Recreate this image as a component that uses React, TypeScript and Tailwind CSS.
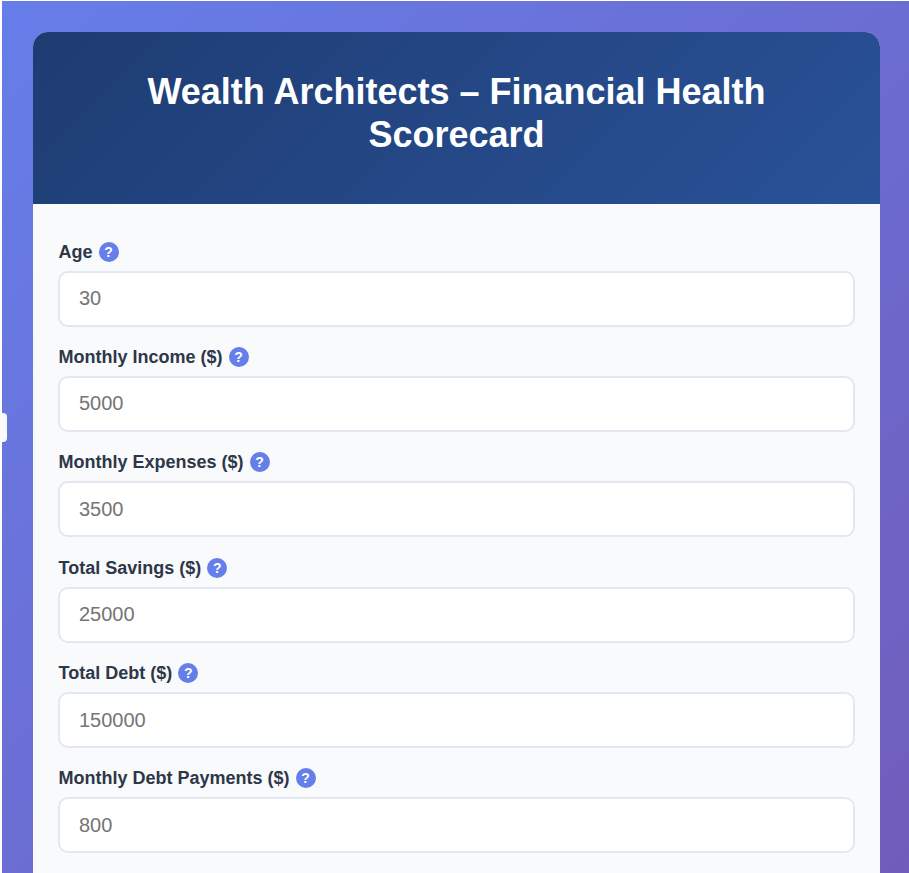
const fields = [
  { label: "Age", value: "30" },
  { label: "Monthly Income ($)", value: "5000" },
  { label: "Monthly Expenses ($)", value: "3500" },
  { label: "Total Savings ($)", value: "25000" },
  { label: "Total Debt ($)", value: "150000" },
  { label: "Monthly Debt Payments ($)", value: "800" },
];

const App = () => {
  return (
    <div className="relative h-[873px] overflow-hidden bg-white pl-[2px] pt-[1px] font-['Liberation_Sans',Arial,sans-serif]">
      <div className="h-[1800px] bg-[linear-gradient(135deg,#667eea_0%,#764ba2_100%)] pt-[31px] pl-[31px] pr-[29px]">
        <div className="overflow-hidden rounded-[15px] bg-[#f9fafc]">
          {/* header */}
          <div className="h-[172px] bg-[linear-gradient(135deg,#1e3c72_0%,#2a5298_100%)] px-[30px] pt-[38px] text-center">
            <h1 className="text-[36px] leading-[43px] font-bold text-white">
              Wealth Architects – Financial Health Scorecard
            </h1>
          </div>

          {/* form */}
          <div className="flex flex-col gap-[19.4px] px-[25px] pb-[200px] pt-[36.5px]">
            {fields.map((f) => (
              <div key={f.label} className="flex flex-col gap-[8px]">
                <label className="flex h-[22px] items-center gap-[6px] pl-[0.5px] text-[18px] leading-[22px] font-bold text-[#2d3748]">
                  {f.label}
                  <span className="flex h-[20px] w-[20px] items-center justify-center rounded-full bg-[#667eea] text-[14px] font-bold text-white">
                    ?
                  </span>
                </label>
                <input
                  readOnly
                  placeholder={f.value}
                  className="h-[56px] w-full rounded-[10px] border-2 border-[#e2e8f0] bg-white px-[19px] text-[20px] text-[#2d3748] outline-none placeholder:text-[#757575]"
                />
              </div>
            ))}
          </div>
        </div>
      </div>

      {/* edge handle */}
      <div className="absolute left-0 top-[413px] h-[29px] w-[7px] rounded-r-[4px] bg-[#fafafa]" />
    </div>
  );
};

export default App;
